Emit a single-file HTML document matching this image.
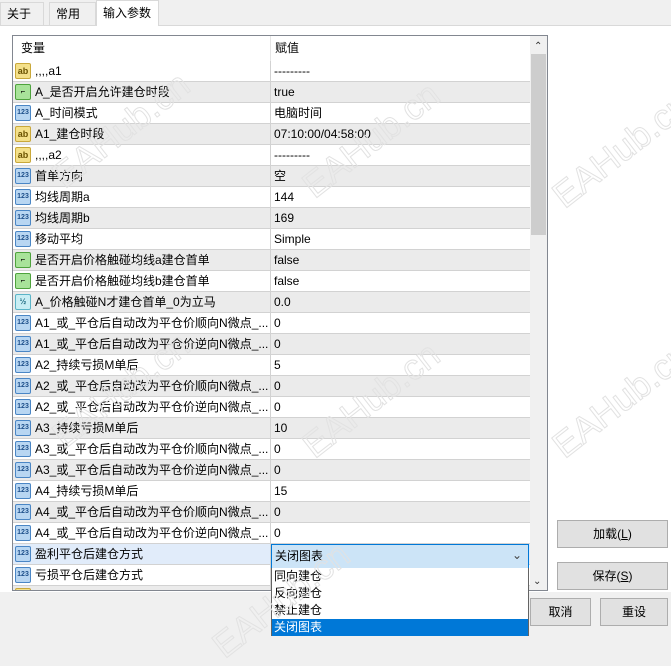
<!DOCTYPE html>
<html><head><meta charset="utf-8"><style>
*{margin:0;padding:0;box-sizing:border-box}
body{width:671px;height:636px;background:#f0f0f0;font-family:"Liberation Sans","Noto Sans CJK SC",sans-serif;font-size:12px;line-height:15px;color:#000;position:relative;overflow:hidden}
.tab{position:absolute;top:2px;height:23px;border:1px solid #d9d9d9;border-bottom:none;background:#f0f0f0;padding:4px 6px;font-size:12px}
.panel{position:absolute;left:0;top:25px;width:671px;height:567px;background:#fff;border-top:1px solid #d9d9d9}
.list{position:absolute;left:12px;top:35px;width:536px;height:556px;border:1px solid #828790;background:#fff;overflow:hidden}
.hdr{position:absolute;left:0;top:0;width:517px;height:25px;background:#fff}
.hdr span{position:absolute;top:5px}
.row{position:absolute;left:0;width:517px;height:21px;border-bottom:1px solid #d2d2d2}
.row.g{background:#ebebeb}
.row.sel{background:#e1ecfa}
.row .n{position:absolute;left:22px;top:3px;white-space:nowrap}
.row .v{position:absolute;left:261px;top:3px;white-space:nowrap}
.row .d{position:absolute;left:257px;top:0;width:1px;height:21px;background:#d2d2d2}
.ic{position:absolute;left:2px;top:2px;width:16px;height:16px;border-radius:2px;font-size:8px;font-weight:bold;text-align:center;line-height:14px}
.ab{background:#f4e08a;border:1px solid #c9a83a;color:#6a5200;font-size:9px}
.bo{background:#a8e39a;border:1px solid #4ea33d}
.nu{background:#b8d6f2;border:1px solid #4a86c5;color:#1d4f8a;font-size:7px}
.ha{background:#c9eef4;border:1px solid #5bb4c7;color:#1d6a80;font-size:8px}
.sb{position:absolute;left:517px;top:0;width:17px;height:554px;background:#f0f0f0}
.btn{position:absolute;background:#e1e1e1;border:1px solid #adadad;text-align:center;line-height:26px}
.wm{position:absolute;font-size:36px;line-height:40px;color:transparent;-webkit-text-stroke:1px #e2e2e2;transform:rotate(-38deg);white-space:nowrap}
</style></head><body>
<div class="panel"></div>
<div class="tab" style="left:0;width:44px">关于</div>
<div class="tab" style="left:49px;width:47px">常用</div>
<div class="tab" style="left:96px;top:0;height:26px;width:63px;background:#fff;padding-top:5px">输入参数</div>

<div class="list">
<div class="hdr"><span style="left:8px">变量</span><span style="left:262px">赋值</span><div style="position:absolute;left:257px;top:0;width:1px;height:25px;background:#e5e5e5"></div></div>
<div id="rows"></div>
<div class="sb">
<div style="position:absolute;left:4px;top:3px;font-size:10px;color:#333">&#8963;</div>
<div style="position:absolute;left:1px;top:18px;width:15px;height:181px;background:#cdcdcd"></div>
<div style="position:absolute;left:3px;top:538px;font-size:10px;color:#333">&#8964;</div>
</div>
</div>

<div style="position:absolute;left:271px;top:544px;width:258px;height:25px;background:#cce4f7;border:1px solid #0078d7;padding:4px 3px">关闭图表<span style="position:absolute;right:6px;top:3px;color:#444">&#8964;</span></div>
<div style="position:absolute;left:271px;top:568px;width:258px;height:68px;background:#fff;border:1px solid #646464;border-top:none">
<div style="height:17px;padding:1px 2px">同向建仓</div>
<div style="height:17px;padding:1px 2px">反向建仓</div>
<div style="height:17px;padding:1px 2px">禁止建仓</div>
<div style="height:17px;padding:1px 2px;background:#0078d7;color:#fff">关闭图表</div>
</div>

<div class="btn" style="left:557px;top:520px;width:111px;height:28px">加载(<u>L</u>)</div>
<div class="btn" style="left:557px;top:562px;width:111px;height:28px">保存(<u>S</u>)</div>
<div class="btn" style="left:530px;top:598px;width:61px;height:28px">取消</div>
<div class="btn" style="left:600px;top:598px;width:68px;height:28px">重设</div>

<div class="wm" style="left:40px;top:110px">EAHub.cn</div>
<div class="wm" style="left:290px;top:120px">EAHub.cn</div>
<div class="wm" style="left:540px;top:130px">EAHub.cn</div>
<div class="wm" style="left:40px;top:370px">EAHub.cn</div>
<div class="wm" style="left:290px;top:380px">EAHub.cn</div>
<div class="wm" style="left:540px;top:380px">EAHub.cn</div>
<div class="wm" style="left:200px;top:580px">EAHub.cn</div>

<script>
var d=[["ab",",,,,a1","---------"],["bo","A_是否开启允许建仓时段","true"],["nu","A_时间模式","电脑时间"],["ab","A1_建仓时段","07:10:00/04:58:00"],["ab",",,,,a2","---------"],["nu","首单方向","空"],["nu","均线周期a","144"],["nu","均线周期b","169"],["nu","移动平均","Simple"],["bo","是否开启价格触碰均线a建仓首单","false"],["bo","是否开启价格触碰均线b建仓首单","false"],["ha","A_价格触碰N才建仓首单_0为立马","0.0"],["nu","A1_或_平仓后自动改为平仓价顺向N微点_...","0"],["nu","A1_或_平仓后自动改为平仓价逆向N微点_...","0"],["nu","A2_持续亏损M单后","5"],["nu","A2_或_平仓后自动改为平仓价顺向N微点_...","0"],["nu","A2_或_平仓后自动改为平仓价逆向N微点_...","0"],["nu","A3_持续亏损M单后","10"],["nu","A3_或_平仓后自动改为平仓价顺向N微点_...","0"],["nu","A3_或_平仓后自动改为平仓价逆向N微点_...","0"],["nu","A4_持续亏损M单后","15"],["nu","A4_或_平仓后自动改为平仓价顺向N微点_...","0"],["nu","A4_或_平仓后自动改为平仓价逆向N微点_...","0"],["nu","盈利平仓后建仓方式",""],["nu","亏损平仓后建仓方式",""],["ab","",""]];
var t={ab:"ab",bo:"⌐",nu:"123",ha:"½"};
var h="";
d.forEach(function(r,i){var c=i==23?"row sel":(i%2?"row g":"row");
h+='<div class="'+c+'" style="top:'+(25+i*21)+'px"><div class="ic '+r[0]+'">'+t[r[0]]+'</div><span class="n">'+r[1]+'</span><div class="d"></div><span class="v">'+r[2]+'</span></div>';});
document.getElementById("rows").innerHTML=h;
</script>
</body></html>
